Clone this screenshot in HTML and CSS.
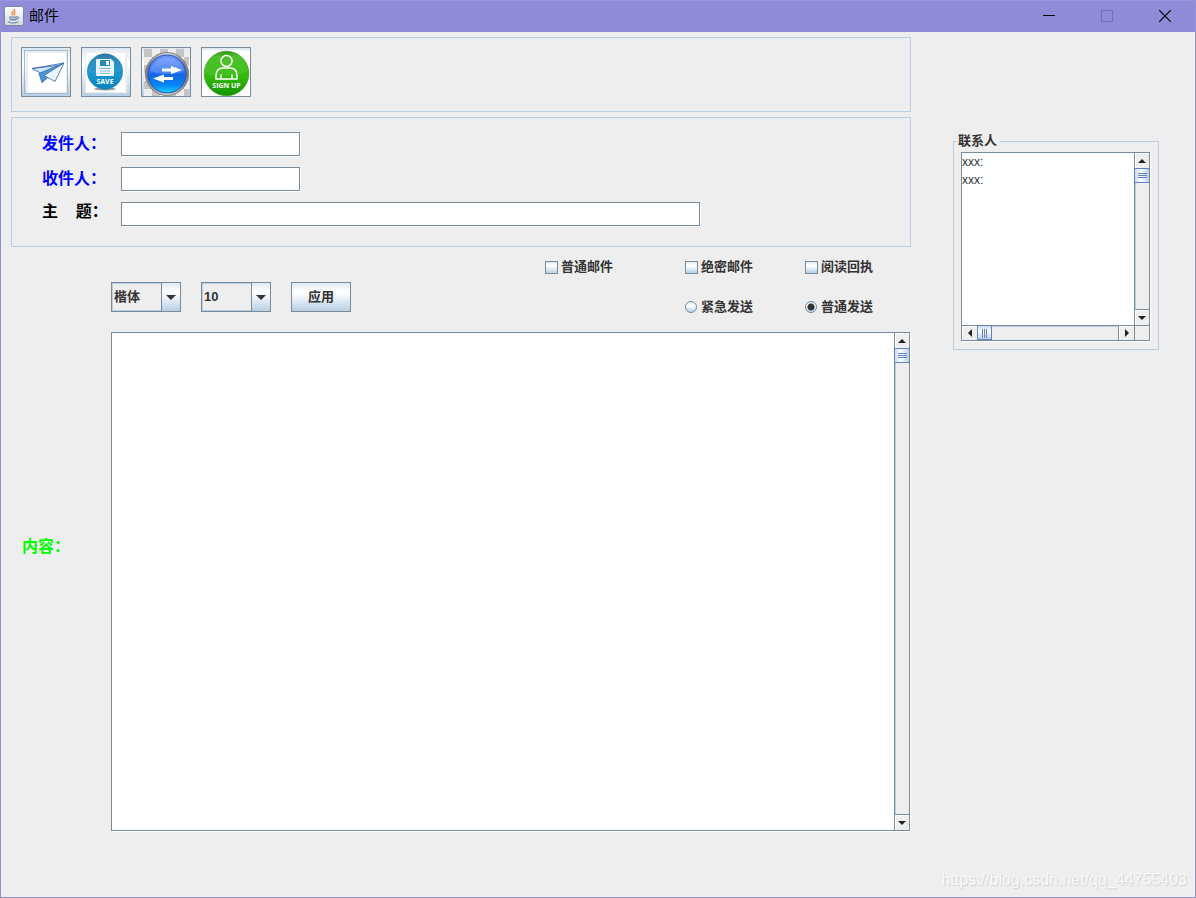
FILE: index.html
```html
<!DOCTYPE html>
<html lang="zh-CN">
<head>
<meta charset="utf-8">
<meta name="viewport" content="width=device-width, initial-scale=1">
<title>邮件</title>
<link rel="stylesheet" href="styles.css">
</head>
<body>
<div class="window">
  <header class="titlebar">
    <svg class="app-icon" viewBox="0 0 20 20" aria-hidden="true">
      <defs><linearGradient id="tile" x2="0" y2="1"><stop stop-color="#fff"/><stop offset="1" stop-color="#d5d9dc"/></linearGradient></defs>
      <rect x=".5" y=".5" width="19" height="19" rx="2" fill="url(#tile)" stroke="#77889b"/>
      <path d="M10.500 3c1 2-3 2.500-2.500 4.500 .2 1 1 1 1.200 2M12 5.500c-2 1-2.300 2-1.300 3.500" fill="none" stroke="#ee8a3a" stroke-width="1.300"/>
      <path d="M5 10.500h8c-.2 2-.5 3-1 4H6.500c-.8-1-1.200-2-1.500-4z" fill="#6e8fae"/>
      <path d="M12.500 11c3-1 3 2 0 2.500M4 15.500c2 2 8 2 10.500 0" fill="none" stroke="#587c9f"/>
      <path d="M6.500 12.200h5" stroke="#dce5ec"/>
    </svg>
    <h1 class="title">邮件</h1>
    <div class="controls">
      <button class="control" aria-label="最小化"><svg viewBox="0 0 12 12"><path d="M0 5.500h12" stroke="#000"/></svg></button>
      <button class="control" aria-label="最大化" disabled><svg viewBox="0 0 12 12"><rect x=".5" y=".5" width="11" height="11" fill="none" stroke="#736fb1"/></svg></button>
      <button class="control" aria-label="关闭"><svg viewBox="0 0 12 12"><path d="M0 0l12 12M12 0L0 12" stroke="#000" stroke-width="1.200"/></svg></button>
    </div>
  </header>

  <div class="content">
    <main class="compose">
      <div class="panel toolbar">
        <button class="tool focused" aria-label="发送">
          <svg viewBox="0 0 48 48">
            <rect x="4" y="4" width="42" height="42" fill="#eee"/><rect x="6" y="5" width="38" height="39" fill="#fff"/>
            <g stroke="#3567ab" stroke-width=".8" stroke-linejoin="round">
              <path d="M10 20.500L42 15 21 26.500z" fill="#cfe5f8"/>
              <path d="M17 25.500L42 15 20 34.500z" fill="#4e96dc"/>
              <path d="M22 27.500L42 15 33 33.500z" fill="#eaf4fd"/>
              <path d="M10 20.500L36 17.500M20 34.500L25 29" fill="none"/>
            </g>
          </svg>
        </button>
        <button class="tool" aria-label="保存">
          <svg viewBox="0 0 48 48">
            <defs><linearGradient id="save" x2="0" y2="1"><stop stop-color="#25668e"/><stop offset=".15" stop-color="#1c83b6"/><stop offset=".6" stop-color="#1994cd"/><stop offset="1" stop-color="#0785bd"/></linearGradient></defs>
            <rect x="3" y="3" width="42" height="42" fill="#eee"/><rect x="4" y="5" width="39" height="39" fill="#fff"/>
            <ellipse cx="23" cy="41" rx="11" ry="1.500" fill="#999"/>
            <circle cx="23" cy="23.500" r="17.700" fill="url(#save)" stroke="#087baa" stroke-width=".5"/>
            <path d="M6 24a17 17 0 0 1 34-1Q24 29 6 24z" fill="#fff" opacity=".08"/>
            <path d="M14 12q0-1 1-1h14l3 3v13q0 1-1 1H15q-1 0-1-1z" fill="#e8f7ff"/>
            <path d="M18 12h10v6H18z" fill="#278abb"/><path d="M24 13h3v4h-3z" fill="#fff"/>
            <path d="M17 20h12v7H17z" fill="#fff"/><path d="M17 20.500h12M18 23h10M18 25.500h10" stroke="#80bddb"/>
            <text x="23" y="36" text-anchor="middle" class="icon-text">SAVE</text>
          </svg>
        </button>
        <button class="tool" aria-label="切换">
          <svg viewBox="0 0 48 48">
            <defs>
              <pattern id="checks" width="16" height="16" patternUnits="userSpaceOnUse" x="2" y="1"><rect width="16" height="16" fill="#eee"/><path d="M0 0h8v8H0zM8 8h8v8H8z" fill="#c5c5c5"/></pattern>
              <linearGradient id="blue" x2="0" y2="1"><stop stop-color="#7698ff"/><stop offset=".48" stop-color="#286ff0"/><stop offset=".52" stop-color="#1267e4"/><stop offset=".8" stop-color="#0786f5"/><stop offset="1" stop-color="#16d6ff"/></linearGradient>
              <linearGradient id="rim"><stop stop-color="#777"/><stop offset=".5" stop-color="#ddd"/><stop offset="1" stop-color="#777"/></linearGradient>
            </defs>
            <rect x="2" y="1" width="45" height="47" fill="url(#checks)"/>
            <circle cx="25" cy="26" r="21.500" fill="url(#rim)" stroke="#858585"/>
            <circle cx="25" cy="26" r="19" fill="url(#blue)" stroke="#2450bb"/>
            <path d="M8 23Q25 29 42 23A17.500 17.500 0 0 0 8 23z" fill="#fff" opacity=".16"/>
            <path d="M20 20.500h9V18l11 4-11 4v-2.500h-9zM31 29h-9v-2.500l-11 4 11 4V32h9z" fill="#fff"/>
          </svg>
        </button>
        <button class="tool" aria-label="注册">
          <svg viewBox="0 0 48 48">
            <defs><linearGradient id="green" x2="0" y2="1"><stop stop-color="#258804"/><stop offset=".12" stop-color="#3dbc16"/><stop offset=".58" stop-color="#32bb0b"/><stop offset="1" stop-color="#119300"/></linearGradient></defs>
            <rect y="2" width="48" height="46" fill="#fff"/>
            <circle cx="24.500" cy="25.500" r="22.300" fill="url(#green)" stroke="#2b9511" stroke-width=".7"/>
            <path d="M2 26A22 22 0 0 1 46 23Q27 32 2 26z" fill="#fff" opacity=".08"/>
            <g fill="none" stroke="#fff" stroke-width="1.500" stroke-linecap="round" stroke-linejoin="round"><circle cx="24.500" cy="13" r="5.500"/><path d="M14 31v-3q0-8 7-8h7q7 0 7 8v3zM19 31v-4M30 31v-4"/></g>
            <text x="24.500" y="40" text-anchor="middle" class="icon-text">SIGN UP</text>
          </svg>
        </button>
      </div>

      <div class="panel fields">
        <label class="field-label" for="from">发件人：</label><input class="text-field" id="from" type="text">
        <label class="field-label" for="to">收件人：</label><input class="text-field" id="to" type="text">
        <label class="field-label subject-label" for="subject">主&nbsp;&nbsp;&nbsp;&nbsp;题：</label><input class="text-field wide" id="subject" type="text">
      </div>

      <div class="options">
        <div class="format">
          <div class="combo"><select aria-label="字体"><option>楷体</option><option>宋体</option></select><span class="combo-arrow"><svg viewBox="0 0 10 5"><path d="M0 0h10L5 5z"/></svg></span></div>
          <div class="combo"><select aria-label="字号"><option>10</option><option>12</option></select><span class="combo-arrow"><svg viewBox="0 0 10 5"><path d="M0 0h10L5 5z"/></svg></span></div>
          <button class="apply">应用</button>
        </div>
        <div class="flags">
          <label class="choice"><input type="checkbox">普通邮件</label>
          <label class="choice"><input type="checkbox">绝密邮件</label>
          <label class="choice"><input type="checkbox">阅读回执</label>
          <label class="choice second"><input type="radio" name="priority">紧急发送</label>
          <label class="choice"><input type="radio" name="priority" checked>普通发送</label>
        </div>
      </div>

      <div class="editor">
        <label class="body-label" for="body">内容：</label>
        <div class="scroll-pane">
          <textarea class="view" id="body"></textarea>
          <div class="bar vertical">
            <button class="step" aria-label="向上"><svg viewBox="0 0 8 4"><path d="M0 4h8L4 0z"/></svg></button>
            <div class="track"><div class="thumb"></div></div>
            <button class="step" aria-label="向下"><svg viewBox="0 0 8 4"><path d="M0 0h8L4 4z"/></svg></button>
          </div>
        </div>
      </div>
    </main>

    <aside class="side">
      <fieldset class="contacts">
        <legend>联系人</legend>
        <div class="scroll-pane both">
          <ul class="view list"><li>xxx:</li><li>xxx:</li></ul>
          <div class="bar vertical">
            <button class="step" aria-label="向上"><svg viewBox="0 0 8 4"><path d="M0 4h8L4 0z"/></svg></button>
            <div class="track"><div class="thumb"></div></div>
            <button class="step" aria-label="向下"><svg viewBox="0 0 8 4"><path d="M0 0h8L4 4z"/></svg></button>
          </div>
          <div class="bar horizontal">
            <button class="step" aria-label="向左"><svg class="side-arrow" viewBox="0 0 4 8"><path d="M4 0v8L0 4z"/></svg></button>
            <div class="track"><div class="thumb"></div></div>
            <button class="step" aria-label="向右"><svg class="side-arrow" viewBox="0 0 4 8"><path d="M0 0v8l4-4z"/></svg></button>
          </div>
          <div class="corner"></div>
        </div>
      </fieldset>
    </aside>
  </div>
  <div class="watermark">https://blog.csdn.net/qq_44755403</div>
</div>
</body>
</html>
```
FILE: styles.css
```css
:root {
  --line: #7a8a99;
  --soft: #b8cfe5;
  --face: #eeeeee;
  --ink: #333333;
  --thumb: #6382bf;
  --ocean: linear-gradient(#dde8f3, #ffffff 30%, #ffffff 35%, #b8cfe5);
}

* { box-sizing: border-box; }

body {
  margin: 0;
  background: var(--face);
  color: var(--ink);
  font: bold 13px/18px "Liberation Sans", "Noto Sans CJK SC", sans-serif;
}

button, input, select, textarea { font: inherit; color: inherit; margin: 0; border-radius: 0; }
button { padding: 0; border: 0; background: none; }
svg { display: block; }

.window {
  position: relative;
  display: flex;
  flex-direction: column;
  min-height: 100vh;
  border: 1px solid #9590d6;
  border-top: 0;
}

.titlebar {
  display: flex;
  align-items: center;
  height: 32px;
  padding: 0 1px 1px 3px;
  background: #8f8bd9;
  border-top: 1px solid #9b96dc;
}
.app-icon { width: 20px; height: 20px; }
.title { margin: 0 0 0 5px; color: #000; font-size: 15px; font-weight: normal; }
.controls { display: flex; margin-left: auto; height: 100%; }
.control { display: grid; place-items: center; width: 58px; }
.control svg { width: 12px; height: 12px; }

.content { flex: 1; display: flex; gap: 42px; padding: 5px 36px 66px 10px; }
.compose { flex: 1; min-width: 0; display: flex; flex-direction: column; }
.panel { border: 1px solid var(--soft); }

.toolbar { display: flex; gap: 10px; height: 75px; padding: 9px; margin-bottom: 5px; }
.tool { width: 50px; height: 50px; border: 1px solid var(--line); background: var(--ocean); }
.tool svg { width: 48px; height: 48px; }
.focused { outline: 1px solid #a3b8cc; outline-offset: -4px; }
.icon-text { fill: #fff; font: bold 7px "Open Sans", sans-serif; }

.fields {
  display: grid;
  grid-template-columns: 79px 1fr;
  grid-auto-rows: 25px;
  row-gap: 10px;
  height: 130px;
  padding: 14px 30px;
}
.field-label, .body-label { font-size: 16px; line-height: 24px; color: #0000ff; }
.field-label { white-space: nowrap; }
.subject-label { color: #000; line-height: 20px; }
.body-label { color: #00ff00; }
.text-field {
  width: 179px;
  max-width: 100%;
  height: 24px;
  padding: 2px;
  border: 1px solid var(--line);
  background: #fff;
  box-shadow: 1px 1px 0 #fff;
}
.wide { width: 579px; }

.options { display: flex; justify-content: space-between; height: 85px; padding-left: 100px; }
.format { display: flex; gap: 20px; padding-top: 35px; }
.combo { position: relative; width: 70px; height: 30px; }
.combo select {
  appearance: none;
  width: 100%;
  height: 100%;
  padding: 0 20px 1px 2px;
  border: 1px solid var(--line);
  background: var(--face);
  box-shadow: inset 0 0 0 1px var(--soft);
}
.combo-arrow {
  position: absolute;
  inset: 1px 1px 1px auto;
  display: grid;
  place-items: center;
  width: 19px;
  border-left: 1px solid var(--line);
  background: var(--ocean);
  pointer-events: none;
}
.combo-arrow svg { width: 10px; height: 5px; fill: var(--ink); }
.apply { width: 60px; height: 30px; border: 1px solid var(--line); background: var(--ocean); }

.flags { display: grid; grid-template-columns: 140px 120px 106px; grid-auto-rows: 40px; }
.choice { display: flex; align-items: center; gap: 3px; }
.second { grid-column: 2; }
.choice input { appearance: none; width: 13px; height: 13px; border: 1px solid var(--line); background: var(--ocean); }
.choice input[type="radio"] { width: 12px; height: 12px; margin-right: 1px; border-radius: 50%; }
.choice input[type="radio"]:checked { background: radial-gradient(circle, var(--ink) 3px, transparent 4px), var(--ocean); }
.choice input[type="checkbox"]:checked { background: var(--ink); }

.editor { flex: 1; display: grid; grid-template-columns: 100px 1fr; min-height: 240px; padding-right: 1px; }
.body-label { padding: 203px 0 0 11px; }

.scroll-pane {
  display: grid;
  grid-template-columns: 1fr 15px;
  border: 1px solid var(--line);
  background: var(--face);
  box-shadow: 1px 1px 0 #fff;
}
.view { display: block; width: 100%; height: 100%; margin: 0; padding: 0; border: 0; background: #fff; resize: none; outline: 0; }
.list { list-style: none; color: var(--ink); font-size: 12px; font-weight: normal; }
.bar { display: flex; }
.vertical { flex-direction: column; border-left: 1px solid var(--line); }
.horizontal { border-top: 1px solid var(--line); }
.step { flex: none; display: grid; place-items: center; width: 15px; height: 15px; box-shadow: inset 1px 1px 0 #fff; }
.vertical .step { width: 14px; }
.horizontal .step { height: 14px; }
.step svg { width: 8px; height: 4px; fill: #222; }
.step .side-arrow { width: 4px; height: 8px; }
.track { flex: 1; }
.vertical .track { border-left: 1px solid var(--soft); border-bottom: 1px solid var(--line); }
.horizontal .track { border-top: 1px solid var(--soft); border-right: 1px solid var(--line); }
.thumb { border: 1px solid var(--thumb); }
.vertical .thumb {
  height: 15px;
  margin: 0 -1px 0 -2px;
  background: repeating-linear-gradient(var(--thumb) 0 1px, #fff 1px 2px) 3px 4px / 9px 6px no-repeat, linear-gradient(90deg, #c8dbee, #fff 40%, #b8cfe5);
  background: linear-gradient(var(--thumb), var(--thumb)) 3px 4px / 9px 1px no-repeat, linear-gradient(var(--thumb), var(--thumb)) 3px 6px / 9px 1px no-repeat, linear-gradient(var(--thumb), var(--thumb)) 3px 8px / 9px 1px no-repeat, linear-gradient(90deg, #c8dbee, #fff 40%, #b8cfe5);
}
.horizontal .thumb {
  width: 15px;
  height: 15px;
  margin-top: -2px;
  background: linear-gradient(var(--thumb), var(--thumb)) 4px 3px / 1px 9px no-repeat, linear-gradient(var(--thumb), var(--thumb)) 6px 3px / 1px 9px no-repeat, linear-gradient(var(--thumb), var(--thumb)) 8px 3px / 1px 9px no-repeat, linear-gradient(#c8dbee, #fff 40%, #b8cfe5);
}
.corner { border-top: 1px solid var(--line); border-left: 1px solid var(--line); }

.side { width: 206px; padding-top: 95px; }
.contacts { min-width: 0; margin: 0; padding: 2px 4px 8px 3px; border: 1px solid var(--soft); }
.contacts legend { padding: 0 3px 0 1px; }
.both { grid-template-rows: 172px 15px; margin: 0 4px; }

.watermark {
  position: absolute;
  right: 8px;
  bottom: 8px;
  color: #f8f8f8;
  font-size: 16px;
  font-weight: normal;
  text-shadow: 1px 1px 1px #d0d0d0;
}
```
